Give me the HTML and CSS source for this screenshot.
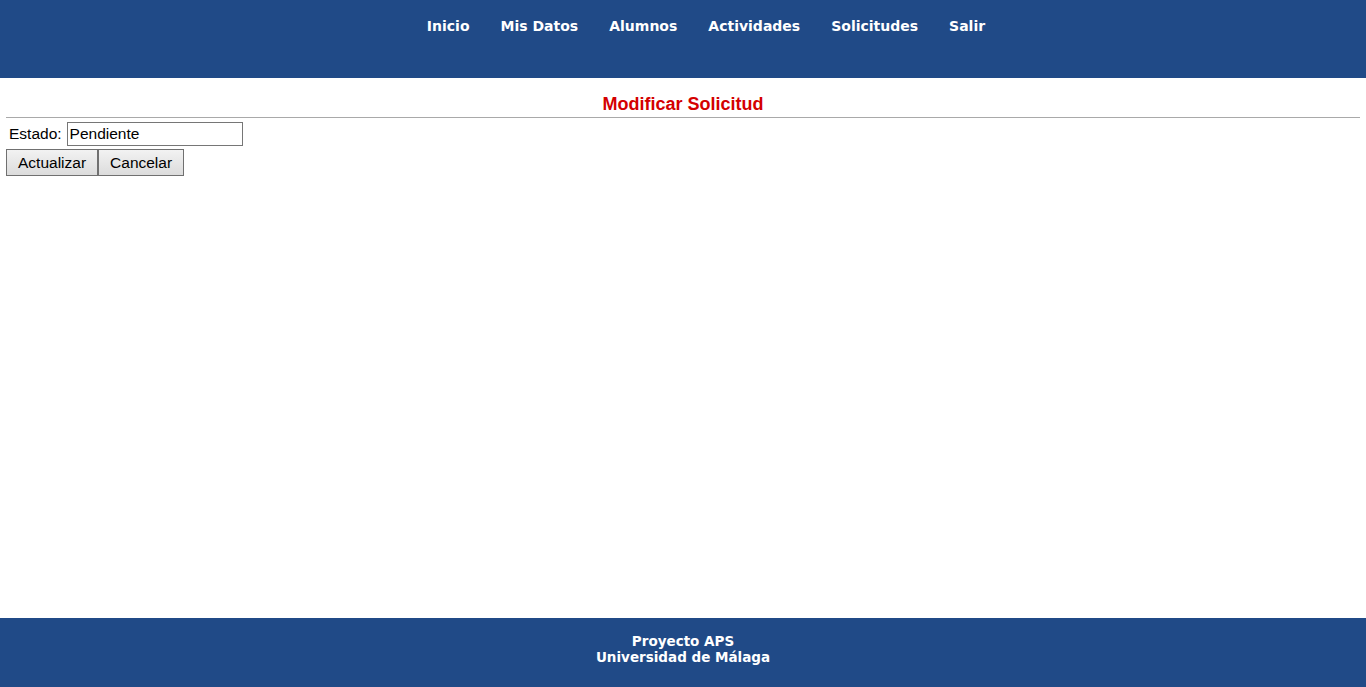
FILE: index.html
```html
<!DOCTYPE html>
<html lang="es">
<head>
<meta charset="utf-8">
<title>Modificar Solicitud</title>
<link rel="stylesheet" href="styles.css">
</head>
<body>
<header class="header">
  <nav class="nav">
    <a href="#">Inicio</a>
    <a href="#">Mis Datos</a>
    <a href="#">Alumnos</a>
    <a href="#">Actividades</a>
    <a href="#">Solicitudes</a>
    <a href="#">Salir</a>
  </nav>
</header>
<main class="main">
  <h1 class="title">Modificar Solicitud</h1>
  <hr class="rule">
  <form class="form">
    <div class="row">
      <label class="label" for="estado">Estado:</label>
      <input class="input" id="estado" type="text" value="Pendiente">
    </div>
    <div class="buttons">
      <button type="button" class="btn">Actualizar</button>
      <button type="button" class="btn">Cancelar</button>
    </div>
  </form>
</main>
<footer class="footer">
  <div>Proyecto APS</div>
  <div>Universidad de Málaga</div>
</footer>
</body>
</html>
```
FILE: styles.css
```css
html, body {
  margin: 0;
  padding: 0;
  height: 100%;
}
body {
  display: flex;
  flex-direction: column;
  font-family: "Liberation Sans", Arial, sans-serif;
  background: #fff;
  color: #000;
}
.header {
  height: 78px;
  background: #204a87;
  flex: none;
}
.nav {
  display: flex;
  justify-content: center;
  padding: 17px 0 0 46px;
  gap: 31px;
}
.nav a {
  color: #fff;
  text-decoration: none;
  font-family: "DejaVu Sans", Verdana, sans-serif;
  font-weight: bold;
  font-size: 14px;
  line-height: 18px;
}
.main {
  flex: 1;
  padding: 0 6px;
}
.title {
  margin: 16px 0 0;
  text-align: center;
  color: #d40000;
  font-size: 18px;
  line-height: 21px;
  font-weight: bold;
}
.rule {
  margin: 2px 0 0;
  border: 0;
  border-top: 1px solid #a9a9a9;
  height: 0;
}
.form {
  margin: 0;
}
.row {
  display: flex;
  align-items: center;
  padding: 4px 0 0 3px;
  gap: 5px;
}
.label {
  font-size: 15.5px;
}
.input {
  width: 176px;
  height: 24px;
  box-sizing: border-box;
  border: 1px solid #767676;
  padding: 0 2px;
  font-family: "Liberation Sans", Arial, sans-serif;
  font-size: 15.5px;
  margin: 0;
}
.buttons {
  display: flex;
  padding-top: 3px;
}
.btn {
  height: 27px;
  box-sizing: border-box;
  border: 1px solid #707070;
  background: linear-gradient(#f2f2f2, #dcdcdc);
  font-family: "Liberation Sans", Arial, sans-serif;
  font-size: 15.5px;
  padding: 0 11px;
  margin: 0;
  color: #000;
}
.footer {
  height: 69px;
  flex: none;
  background: #204a87;
  color: #fff;
  text-align: center;
  font-family: "DejaVu Sans", Verdana, sans-serif;
  font-weight: bold;
  font-size: 13.5px;
  line-height: 16px;
  padding-top: 15px;
  box-sizing: border-box;
}
```
